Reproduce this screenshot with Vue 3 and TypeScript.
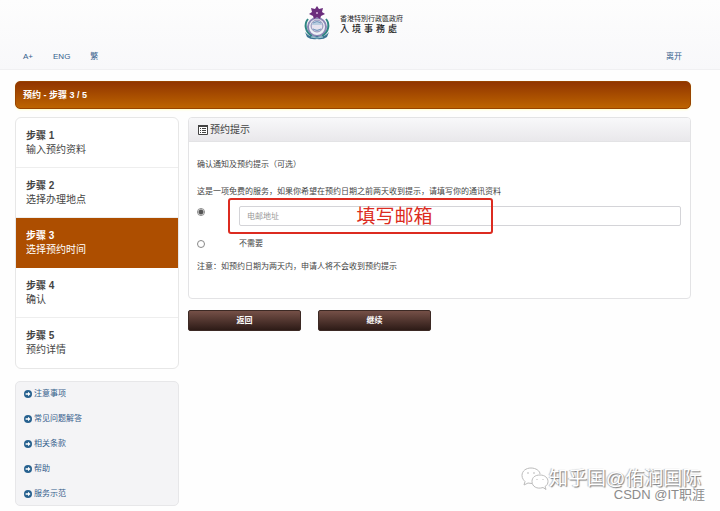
<script setup lang="ts">
import { ref } from 'vue'

interface Step {
  id: number
  label: string
}

const steps: Step[] = [
  { id: 1, label: '输入预约资料' },
  { id: 2, label: '选择办理地点' },
  { id: 3, label: '选择预约时间' },
  { id: 4, label: '确认' },
  { id: 5, label: '预约详情' },
]
const currentStep = 3
const helpLinks: string[] = ['注意事项', '常见问题解答', '相关条款', '帮助', '服务示范']
const reminder = ref<'email' | 'none'>('email')
const email = ref('')
</script>

<template>
  <div class="page">
    <header class="top">
      <div class="brand">
        <svg class="emblem" viewBox="0 0 28 34" aria-hidden="true">
          <circle cx="14" cy="21" r="9" fill="#eef1f6" stroke="#8b86b5" stroke-width="2" />
          <circle cx="14" cy="20" r="6" fill="#b9cde0" stroke="#9d93ba" />
          <path d="M9 19h10v3q-5 3-10 0z" fill="#e8e4ef" />
          <path d="M10 23q4 3 8 0M10 17q4-3 8 0" fill="none" stroke="#7999bd" />
          <path d="M5 13C1 18 2 26 9 30M23 13c4 5 3 13-4 17" fill="none" stroke="#2e8582" stroke-width="2" />
          <path d="M2 26q5 6 12 4 7 2 12-4l-2 5q-4 3-10 2-6 1-10-2z" fill="#3b7493" />
          <path d="M8 31q6 2 12 0" fill="none" stroke="#9fc7d0" />
          <path d="M14 0l2 3 4-1-1 4 3 2-4 2-1 3-3-2-3 2-1-3-4-2 3-2-1-4 4 1z" fill="#6b2d7d" />
          <circle cx="14" cy="7" r="1" fill="#d9b8dd" />
        </svg>
        <div class="brand-text">
          <div class="brand-region">香港特別行政區政府</div>
          <div class="brand-dept">入境事務處</div>
        </div>
      </div>
      <nav class="tools">
        <a href="#">A+</a>
        <a href="#">ENG</a>
        <a href="#">繁</a>
        <a class="leave" href="#">离开</a>
      </nav>
    </header>

    <main class="content">
      <h1 class="title">预约 - 步骤 3 / 5</h1>
      <div class="columns">
        <aside class="side">
          <ol class="steps">
            <li v-for="s in steps" :key="s.id" :class="{ active: s.id === currentStep }">
              <strong>步骤 {{ s.id }}</strong>
              <span>{{ s.label }}</span>
            </li>
          </ol>
          <nav class="help">
            <a v-for="h in helpLinks" :key="h" href="#">
              <svg viewBox="0 0 10 10" aria-hidden="true">
                <circle cx="5" cy="5" r="5" fill="#27618f" />
                <path d="M2 4h3V2.200L8.200 5 5 7.800V6H2z" fill="#fff" />
              </svg>
              {{ h }}
            </a>
          </nav>
        </aside>

        <form class="main" @submit.prevent>
          <section class="panel">
            <h2>
              <svg viewBox="0 0 10 10" aria-hidden="true">
                <path d="M.5.5h9v9h-9z" fill="#fff" stroke="#444" />
                <path d="M0 0h10v2H0z" fill="#444" />
                <path d="M2 3.500h1M4 3.500h4M2 5.500h1M4 5.500h4M2 7.500h1M4 7.500h4" stroke="#444" />
              </svg>
              预约提示
            </h2>
            <div class="panel-body">
              <p>确认通知及预约提示（可选）</p>
              <p class="intro">这是一项免费的服务，如果你希望在预约日期之前两天收到提示，请填写你的通讯资料</p>
              <div class="option email-option">
                <input v-model="reminder" type="radio" name="reminder" value="email" aria-label="电邮地址" />
                <div class="field">
                  <input v-model="email" class="email" type="email" placeholder="电邮地址" aria-label="电邮地址" />
                  <div class="callout">填写邮箱</div>
                </div>
              </div>
              <div class="option">
                <input id="no-reminder" v-model="reminder" type="radio" name="reminder" value="none" />
                <label for="no-reminder">不需要</label>
              </div>
              <p class="note">注意：如预约日期为两天内，申请人将不会收到预约提示</p>
            </div>
          </section>
          <div class="actions">
            <button type="button">返回</button>
            <button type="submit">继续</button>
          </div>
        </form>
      </div>
    </main>

    <div class="watermark">
      <svg viewBox="0 0 28 24" aria-hidden="true">
        <path d="M10 1C5 1 1 4 1 8.500c0 3 2 5 3 6L3 18l4-2 4 .5M10 1c5 0 9 3 9 6" />
        <path d="M19 8c5 0 8 3 8 6.500 0 2-1 4-3 5l1 3-3-2c-6 2-11-1-11-6 0-4 3-6.500 8-6.500z" />
        <path d="M7 5v2M13 5v2M16 12v1M22 12v1" />
      </svg>
      <span class="mark-name">知乎国@侑润国际</span>
      <span class="mark-csdn">CSDN @IT职涯</span>
    </div>
  </div>
</template>

<style>
body {
  margin: 0;
  background: #fefefe;
}
</style>

<style scoped>
* {
  box-sizing: border-box;
}
.page {
  position: relative;
  min-height: 100vh;
  overflow: hidden;
  font-family: "Liberation Sans", "Noto Sans CJK SC", sans-serif;
  font-size: 8px;
  line-height: 12px;
  color: #444;
}
a {
  color: #34608c;
  text-decoration: none;
}
.top {
  height: 70px;
  background: linear-gradient(#fdfdfd, #f8f8fa);
  border-bottom: 1px solid #f0f0f2;
}
.brand {
  display: flex;
  justify-content: center;
  gap: 9px;
  height: 48px;
  padding: 6px 14px 0 0;
}
.emblem {
  width: 28px;
  height: 34px;
}
.brand-text {
  padding-top: 6px;
  font-family: "Noto Sans CJK TC", sans-serif;
  color: #222;
}
.brand-region {
  font-size: 7px;
  line-height: 12px;
}
.brand-dept {
  font-size: 9px;
  line-height: 10px;
  font-weight: 500;
  letter-spacing: 3px;
}
.tools {
  display: flex;
  gap: 20px;
  padding: 3px 38px 0 23px;
}
.leave {
  margin-left: auto;
}
.content {
  padding: 11px 29px 0 15px;
}
.title {
  margin: 0;
  padding: 0 7px;
  border: 1px solid #984300;
  border-radius: 5px;
  background: linear-gradient(#913500, #bd6400);
  box-shadow: 0 1px 2px #ffffc8;
  color: #fff;
  font-size: 9px;
  line-height: 26px;
}
.columns {
  display: flex;
  gap: 9px;
  margin-top: 8px;
}
.side {
  flex: 0 0 164px;
}
.steps {
  margin: 0;
  padding: 0;
  list-style: none;
  border: 1px solid #e7e7e7;
  border-radius: 6px;
  background: #fff;
  overflow: hidden;
}
.steps li {
  display: flex;
  flex-direction: column;
  height: 50px;
  padding: 11px 10px 0;
  border-bottom: 1px solid #eee;
  font-size: 10px;
  line-height: 14px;
}
.steps li:last-child {
  border-bottom: 0;
}
.steps li.active {
  background: #ad4e00;
  border-color: #ad4e00;
  color: #fff;
}
.help {
  display: flex;
  flex-direction: column;
  gap: 13px;
  margin-top: 12px;
  padding: 6px 8px 5px;
  border: 1px solid #e7e7e9;
  border-radius: 5px;
  background: #f4f4f6;
}
.help a {
  display: flex;
  align-items: center;
  gap: 2px;
}
.help svg {
  width: 8px;
  height: 8px;
}
.main {
  flex: 1;
  min-width: 0;
}
.panel {
  border: 1px solid #e3e3e5;
  border-radius: 4px;
  background: #fff;
}
.panel h2 {
  display: flex;
  align-items: center;
  gap: 2px;
  height: 24px;
  margin: 0;
  padding: 0 9px;
  border-bottom: 1px solid #e3e3e5;
  border-radius: 3px 3px 0 0;
  background: linear-gradient(#f8f8fa, #e9e8eb);
  font-size: 10px;
  font-weight: 400;
}
.panel h2 svg {
  width: 10px;
  height: 10px;
}
.panel-body {
  padding: 17px 9px 25px 8px;
}
.panel-body p {
  margin: 0;
}
.panel-body .intro {
  margin: 15px 0 8px;
}
.option {
  display: flex;
  align-items: center;
  gap: 34px;
}
.option > input {
  appearance: none;
  flex: none;
  width: 8px;
  height: 8px;
  margin: 0;
  border: 1px solid #888;
  border-radius: 50%;
  background: #fff;
}
.option > input:checked {
  background: radial-gradient(circle, #555 0 2px, #fff 3px);
}
.email-option {
  align-items: flex-start;
  margin-bottom: 12px;
}
.email-option > input {
  margin-top: 2px;
}
.field {
  position: relative;
  flex: 1;
}
.email {
  display: block;
  width: 100%;
  height: 20px;
  padding: 0 7px;
  border: 1px solid #d4d4d8;
  border-radius: 2px;
  background: #fff;
  font: inherit;
  color: #444;
}
.email::placeholder {
  color: #999;
}
.callout {
  position: absolute;
  top: -8px;
  left: -11px;
  width: 265px;
  height: 36px;
  padding-left: 68px;
  border: 2px solid #dc2b20;
  border-radius: 3px;
  color: #dc2b20;
  font-size: 19px;
  line-height: 34px;
  text-align: center;
  pointer-events: none;
}
.note {
  padding-top: 11px;
}
.actions {
  display: flex;
  gap: 17px;
  margin-top: 11px;
}
.actions button {
  width: 113px;
  height: 21px;
  padding: 0;
  border: 1px solid #3c2924;
  border-radius: 2px;
  background: linear-gradient(#755047, #2d1b17);
  color: #fff;
  font: inherit;
  font-weight: 700;
}
.watermark {
  position: absolute;
  right: 15px;
  bottom: 8px;
  width: 184px;
  height: 36px;
  white-space: nowrap;
  pointer-events: none;
}
.watermark svg {
  width: 28px;
  height: 24px;
  fill: #fff;
  stroke: #bbb;
}
.watermark span {
  position: absolute;
}
.mark-name {
  top: 0;
  left: 28px;
  color: #fff;
  font-size: 19px;
  line-height: 24px;
  text-shadow: 1px 1px 1px #777, -1px 0 1px #bbb;
}
.mark-csdn {
  right: 0;
  bottom: 0;
  color: #8b8b8b;
  font-size: 13px;
  line-height: 16px;
}
</style>
